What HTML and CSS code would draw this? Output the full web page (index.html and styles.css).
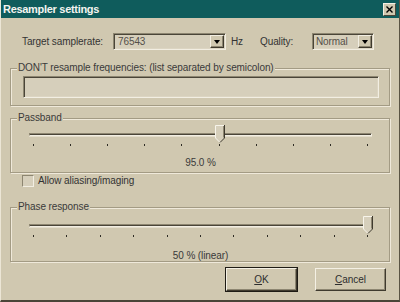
FILE: index.html
```html
<!DOCTYPE html>
<html>
<head>
<meta charset="utf-8">
<link rel="stylesheet" href="styles.css">
</head>
<body>
<div class="window">
  <div class="titlebar">
    <span class="title">Resampler settings</span>
    <span class="close"><svg width="7" height="7" viewBox="0 0 7 7"><path d="M0.5 0.5 L6.5 6.5 M6.5 0.5 L0.5 6.5" stroke="#000" stroke-width="1.4"/></svg></span>
  </div>
  <div class="content">
    <div class="row1">
      <span class="lbl lbl-rate">Target samplerate:</span>
      <div class="combo combo-rate">
        <span class="combo-text">76543</span>
        <span class="drop"><span class="tri"></span></span>
      </div>
      <span class="lbl lbl-hz">Hz</span>
      <span class="lbl lbl-q">Quality:</span>
      <div class="combo combo-q">
        <span class="combo-text">Normal</span>
        <span class="drop"><span class="tri"></span></span>
      </div>
    </div>

    <fieldset class="group g1">
      <legend>DON'T resample frequencies: (list separated by semicolon)</legend>
      <div class="edit"></div>
    </fieldset>

    <fieldset class="group g2">
      <legend>Passband</legend>
      <div class="slider">
        <div class="track"></div>
        <svg class="thumb" style="left: 186px" width="10" height="18" viewBox="0 0 10 18">
          <path d="M0.5 0.5 H9.5 V13 L5 17.5 L0.5 13 Z" fill="#d6cfbb"/>
          <path d="M0.5 13 V0.5 H9" fill="none" stroke="#f7f4ea" stroke-width="1"/>
          <path d="M0.5 13 L5 17.5" fill="none" stroke="#f7f4ea" stroke-width="1"/>
          <path d="M9.5 0 V13 L5 17.5" fill="none" stroke="#3f3a2e" stroke-width="1"/>
          <path d="M8.5 1 V12.5" fill="none" stroke="#8d8671" stroke-width="1"/>
        </svg>
        <div class="ticks t10">
          <i></i><i></i><i></i><i></i><i></i><i></i><i></i><i></i><i></i><i></i>
        </div>
      </div>
      <div class="value v1">95.0 %</div>
    </fieldset>

    <label class="check">
      <span class="box"></span>
      <span>Allow aliasing/imaging</span>
    </label>

    <fieldset class="group g3">
      <legend>Phase response</legend>
      <div class="slider">
        <div class="track"></div>
        <svg class="thumb" style="left: 334px" width="10" height="18" viewBox="0 0 10 18">
          <path d="M0.5 0.5 H9.5 V13 L5 17.5 L0.5 13 Z" fill="#d6cfbb"/>
          <path d="M0.5 13 V0.5 H9" fill="none" stroke="#f7f4ea" stroke-width="1"/>
          <path d="M0.5 13 L5 17.5" fill="none" stroke="#f7f4ea" stroke-width="1"/>
          <path d="M9.5 0 V13 L5 17.5" fill="none" stroke="#3f3a2e" stroke-width="1"/>
          <path d="M8.5 1 V12.5" fill="none" stroke="#8d8671" stroke-width="1"/>
        </svg>
        <div class="ticks t11">
          <i></i><i></i><i></i><i></i><i></i><i></i><i></i><i></i><i></i><i></i><i></i>
        </div>
      </div>
      <div class="value v2">50 % (linear)</div>
    </fieldset>

    <div class="buttons">
      <button class="btn default"><u>O</u>K</button>
      <button class="btn"><u>C</u>ancel</button>
    </div>
  </div>
</div>
</body>
</html>
```

FILE: styles.css
```css
* { box-sizing: border-box; }
html, body {
  margin: 0;
  padding: 0;
  background: #d0c8b0;
}
body {
  font-family: "Liberation Sans", Arial, sans-serif;
  font-size: 10px;
  letter-spacing: -0.1px;
  color: #333;
  white-space: nowrap;
}
.window {
  width: 400px;
  height: 302px;
  background: #d0c8b0;
  border-left: 1px solid #ece6d6;
  border-right: 1px solid #5a5444;
  border-bottom: 2px solid #4a4538;
  display: flex;
  flex-direction: column;
}
.titlebar {
  height: 18px;
  background: #0f5c5c;
  display: flex;
  align-items: center;
  justify-content: space-between;
  padding: 0 3px 0 2px;
}
.title {
  color: #f4f4f0;
  font-weight: bold;
  font-size: 11px;
  letter-spacing: -0.3px;
}
.close {
  width: 13px;
  height: 13px;
  background: #d0c8b0;
  border-top: 1px solid #f4f0e4;
  border-left: 1px solid #f4f0e4;
  border-right: 1px solid #4a4538;
  border-bottom: 1px solid #4a4538;
  display: flex;
  align-items: center;
  justify-content: center;
}
.content {
  padding: 0 9px 0 9px;
  display: flex;
  flex-direction: column;
}
.row1 {
  display: flex;
  align-items: center;
  margin-top: 15px;
  height: 17px;
}
.lbl-rate { margin-left: 12px; width: 91px; }
.lbl-hz { margin-left: 5px; width: 29px; }
.lbl-q { width: 52px; }
.combo {
  height: 17px;
  background: #d6cfbb;
  border-top: 1px solid #8d8671;
  border-left: 1px solid #8d8671;
  border-right: 1px solid #f2eee2;
  border-bottom: 1px solid #f2eee2;
  box-shadow: inset 1px 1px 0 #4a4538, inset -1px -1px 0 #dcd5c2;
  display: flex;
  align-items: center;
  justify-content: space-between;
  padding: 0 1px 0 4px;
}
.combo-rate { width: 113px; }
.combo-q { width: 62px; padding-left: 3px; }
.combo-text { color: #555049; }
.drop {
  width: 14px;
  height: 13px;
  background: #d0c8b0;
  border-top: 1px solid #f2eee2;
  border-left: 1px solid #f2eee2;
  border-right: 1px solid #3f3a2e;
  border-bottom: 1px solid #3f3a2e;
  box-shadow: inset -1px -1px 0 #8d8671;
  display: flex;
  align-items: center;
  justify-content: center;
}
.tri {
  width: 0;
  height: 0;
  border-left: 3.5px solid transparent;
  border-right: 3.5px solid transparent;
  border-top: 4px solid #000;
}

.group {
  margin: 0;
  padding: 0;
  border: 1px solid #a39b84;
  box-shadow: inset 1px 1px 0 #efe9da, 1px 1px 0 #efe9da;
  min-width: 0;
}
.group legend {
  padding: 0 1px;
  margin-left: 5px;
  line-height: 12px;
  background: #d0c8b0;
  color: #3a3a3a;
}
.g1 { margin-top: 12px; height: 44px; padding: 2px 10px 0 12px; }
.g1 legend { margin-left: -6px; }
.edit {
  height: 22px;
  background: #d6cfbb;
  border-top: 1px solid #8d8671;
  border-left: 1px solid #8d8671;
  border-right: 1px solid #f2eee2;
  border-bottom: 1px solid #f2eee2;
  box-shadow: inset 1px 1px 0 #4a4538, inset -1px -1px 0 #dcd5c2;
}

.g2 { margin-top: 6px; height: 61px; padding: 0 17px 0 18px; }
.g3 { margin-top: 14px; height: 61px; padding: 0 17px 0 18px; }
.g2 legend, .g3 legend { margin-left: -12px; }
.slider {
  position: relative;
  height: 24px;
  margin-top: 1px;
}
.g3 .slider { margin-top: 3px; }
.track {
  position: absolute;
  left: 0;
  right: 0;
  top: 8px;
  height: 3px;
  border-top: 1px solid #8d8671;
  border-left: 1px solid #8d8671;
  border-bottom: 1px solid #f2eee2;
  border-right: 1px solid #f2eee2;
  background: #4a4538;
  box-shadow: 0 1px 0 #e4ddcb;
}
.thumb {
  position: absolute;
  top: 0;
}
.ticks {
  position: absolute;
  left: 4px;
  right: 4px;
  top: 19px;
  display: flex;
  justify-content: space-between;
}
.ticks i {
  display: block;
  width: 1px;
  height: 2px;
  background: #2e2b24;
}
.value {
  text-align: center;
  margin-top: 8px;
  color: #3a3a3a;
}
.g3 .value { margin-top: 10px; }

.check {
  display: flex;
  align-items: center;
  margin-top: 1px;
  margin-left: 12px;
  height: 13px;
  gap: 4px;
}
.box {
  width: 12px;
  height: 12px;
  background: #d6cfbb;
  border-top: 1px solid #8d8671;
  border-left: 1px solid #8d8671;
  border-right: 1px solid #f2eee2;
  border-bottom: 1px solid #f2eee2;
}

.buttons {
  display: flex;
  justify-content: flex-end;
  gap: 18px;
  margin-top: 6px;
  padding-right: 4px;
}
.btn {
  width: 71px;
  height: 23px;
  font-family: "Liberation Sans", Arial, sans-serif;
  font-size: 10px;
  color: #2e2e2e;
  background: #d0c8b0;
  border-top: 1px solid #f4f0e4;
  border-left: 1px solid #f4f0e4;
  border-right: 1px solid #3f3a2e;
  border-bottom: 1px solid #3f3a2e;
  box-shadow: inset -1px -1px 0 #8d8671;
  padding: 0;
}
.btn.default {
  outline: 1px solid #1e1b14;
}
```
